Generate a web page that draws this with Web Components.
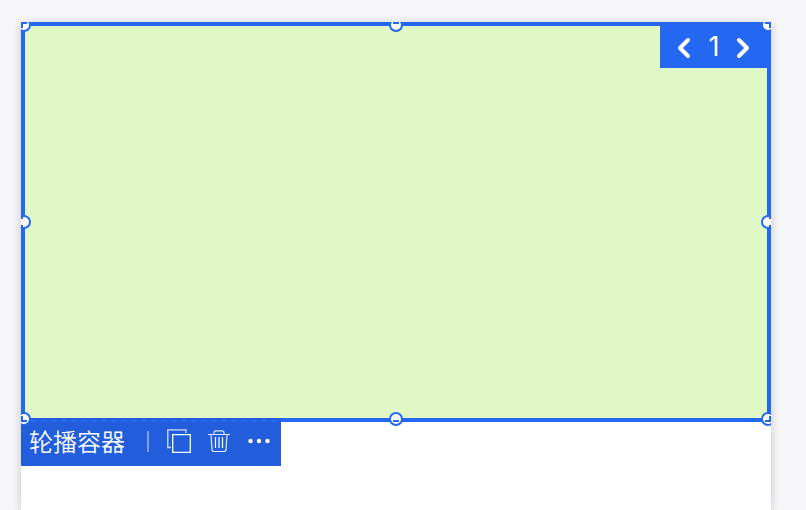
<!DOCTYPE html>
<html lang="zh-CN">
<head>
<meta charset="utf-8">
<title>轮播容器</title>
<style>
html, body { height: 100%; }
body { margin: 0; background: #f7f7f9; overflow: hidden; font-family: "Liberation Sans", "Noto Sans CJK SC", sans-serif; }
</style>
</head>
<body>
<design-canvas>
  <selection-box>
    <slide-pager slot="pager" page="1"></slide-pager>
    <element-toolbar slot="toolbar">轮播容器</element-toolbar>
  </selection-box>
</design-canvas>
<script>
const define = (name, html, setup) => customElements.define(name, class extends HTMLElement {
  constructor() {
    super();
    this.attachShadow({ mode: "open" }).innerHTML = html;
  }
  connectedCallback() { if (setup) setup(this); }
});

define("design-canvas", `
<style>
:host { display: block; height: 100%; box-sizing: border-box; padding: 22px 35px 0 21px; }
main { height: 100%; background: #fff; box-shadow: 0 2px 10px rgba(0,0,0,.2); }
</style>
<main><slot></slot></main>`);

define("resize-handle", `
<style>
:host { display: block; position: absolute; width: 14px; height: 14px; }
svg { display: block; }
</style>
<svg width="14" height="14" viewBox="0 0 14 14"><circle cx="7" cy="7" r="6" fill="#fff" stroke="#2468f2" stroke-width="2"/><path fill="#2468f2"/></svg>`,
host => host.shadowRoot.querySelector("path").setAttribute("d", host.getAttribute("mark") || ""));

define("selection-box", `
<style>
:host { display: block; }
.frame { position: relative; aspect-ratio: 750 / 400; box-sizing: border-box; border: 4px solid #2468f2; background: #e0f7c6; display: flex; justify-content: flex-end; align-items: flex-start; }
.handles { position: absolute; inset: -4px -4px -10px; overflow: hidden; z-index: 3; pointer-events: none; }
.t { top: -4px; } .m { top: calc(50% - 10px); } .b { bottom: 2px; }
.l { left: -4px; } .c { left: calc(50% - 7px); } .r { right: -4px; }
.bar { position: relative; margin-top: -4px; display: flex; }
</style>
<div class="frame">
  <slot name="pager"></slot>
  <div class="handles">
    <resize-handle class="t l" mark="M4 4H10V6H6V10H4Z"></resize-handle>
    <resize-handle class="t c" mark="M4 4H10V6H4Z"></resize-handle>
    <resize-handle class="t r" mark="M4 4H10V10H8V6H4Z"></resize-handle>
    <resize-handle class="m l" mark="M4 0H6V4H4ZM4 10H6V14H4Z"></resize-handle>
    <resize-handle class="m r" mark="M8 0H10V4H8ZM8 10H10V14H8Z"></resize-handle>
    <resize-handle class="b l" mark="M4 4H6V8H10V10H4Z"></resize-handle>
    <resize-handle class="b c" mark="M4 8H10V10H4Z"></resize-handle>
    <resize-handle class="b r" mark="M8 4H10V10H4V8H8Z"></resize-handle>
  </div>
</div>
<div class="bar"><slot name="toolbar"></slot></div>`);

define("slide-pager", `
<style>
:host { display: flex; align-items: center; gap: 11px; height: 42px; padding: 0 13px 0 14px; background: #2468f2; color: #fff; font: 400 27px/42px Inter, sans-serif; }
button { display: flex; border: 0; padding: 0; background: none; color: inherit; }
svg { display: block; }
output { width: 18px; text-align: center; }
</style>
<button aria-label="上一页"><svg width="20" height="42" viewBox="0 0 20 42" fill="none" stroke="currentColor" stroke-width="4" stroke-linecap="round" stroke-linejoin="round"><path d="M14 14L6 22L14 30"/></svg></button>
<output></output>
<button aria-label="下一页"><svg width="20" height="42" viewBox="0 0 20 42" fill="none" stroke="currentColor" stroke-width="4" stroke-linecap="round" stroke-linejoin="round"><path d="M5 14L13 22L5 30"/></svg></button>`,
host => { host.shadowRoot.querySelector("output").textContent = host.getAttribute("page"); });

define("element-toolbar", `
<style>
:host { position: relative; display: flex; align-items: center; height: 48px; width: 260px; box-sizing: border-box; padding: 0 0 2px 8px; background: #225edb; color: #fff; }
:host::before { content: ""; position: absolute; top: 2px; left: 0; right: 0; height: 2px; background: repeating-linear-gradient(90deg, #2468f2 0 6px, transparent 6px 10px); }
span { font: 350 24px/46px "Noto Sans CJK SC", sans-serif; width: 118px; }
i { width: 2px; height: 21px; background: #7a9ee9; }
button { display: flex; border: 0; padding: 0; background: none; color: inherit; }
.copy { margin-left: 17px; } .trash { margin-left: 16px; } .more { margin-left: 16px; }
</style>
<span><slot></slot></span><i></i>
<button class="copy" aria-label="复制"><svg width="26" height="26" viewBox="0 0 26 26" fill="none" stroke="currentColor" stroke-width="1.3"><path d="M20 5V1.800H1.800V19.500H5" stroke-opacity=".8"/><path d="M6.700 6.700H24.300V24.300H6.700Z"/></svg></button>
<button class="trash" aria-label="删除"><svg width="22" height="26" viewBox="0 0 22 26" fill="none" stroke="currentColor" stroke-width="1.2"><path d="M0 6.500H22M6 6.500V5Q6 2.800 8 2.800H14Q16 2.800 16 5V6.500M3 6.500L4 21.500Q4 23.500 6 23.500H16Q18 23.500 18 21.500L19 6.500" stroke-opacity=".85"/><path d="M7.500 9V20M11 9V20M14.500 9V20"/></svg></button>
<button class="more" aria-label="更多"><svg width="26" height="26" viewBox="0 0 26 26" fill="currentColor"><circle cx="4.500" cy="13" r="2.200"/><circle cx="13" cy="13" r="2.200"/><circle cx="21.500" cy="13" r="2.200"/></svg></button>`);
</script>
</body>
</html>
